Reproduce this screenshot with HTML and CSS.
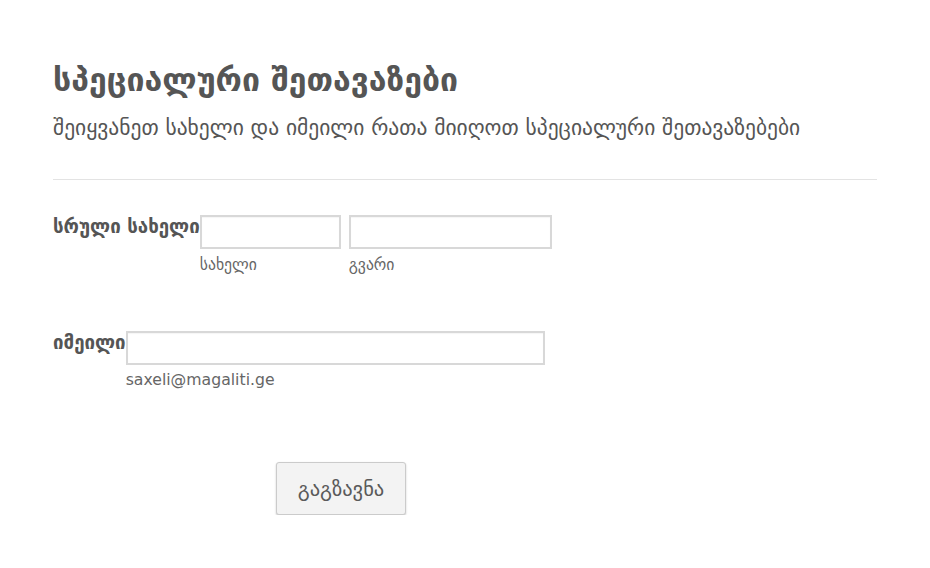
FILE: index.html
```html
<!DOCTYPE html>
<html lang="ka">
<head>
    <meta charset="UTF-8">
    <meta name="viewport" content="width=device-width, initial-scale=1.0">
    <title>სპეციალური შეთავაზები</title>
    <link rel="stylesheet" href="styles.css">
</head>
<body>
    <div class="form">
        <div class="header">
            <h1>სპეციალური შეთავაზები</h1>
            <p class="subtitle">შეიყვანეთ სახელი და იმეილი რათა მიიღოთ სპეციალური შეთავაზებები</p>
        </div>

        <div class="row row-name">
            <label class="label">სრული სახელი</label>
            <div class="field">
                <input type="text" class="input input-first">
                <span class="sub">სახელი</span>
            </div>
            <div class="field field-last">
                <input type="text" class="input input-last">
                <span class="sub">გვარი</span>
            </div>
        </div>

        <div class="row row-email">
            <label class="label">იმეილი</label>
            <div class="field">
                <input type="email" class="input input-email">
                <span class="sub sub-email">saxeli@magaliti.ge</span>
            </div>
        </div>

        <div class="actions">
            <button class="submit">გაგზავნა</button>
        </div>
    </div>
</body>
</html>
```

FILE: styles.css
```css
body {
    margin: 0;
    background-color: #fff;
    font-family: "DejaVu Sans", sans-serif;
    color: #555;
}
.form {
    padding: 54px 53px 0 53px;
    width: 824px;
}
.header {
    border-bottom: 1px solid #e3e3e3;
    padding-bottom: 35px;
}
h1 {
    margin: 0;
    font-size: 32px;
    font-weight: bold;
    line-height: 52px;
    color: #555;
}
.subtitle {
    margin: 6px 0 0 0;
    font-size: 21.5px;
    line-height: 32px;
    color: #555;
}
.row {
    display: flex;
    align-items: flex-start;
}
.row-name {
    margin-top: 35px;
}
.row-email {
    margin-top: 57px;
}
.label {
    font-size: 18.7px;
    font-weight: bold;
    line-height: 24px;
    color: #555;
}
.field {
    display: flex;
    flex-direction: column;
}
.field-last {
    margin-left: 8px;
}
.input {
    height: 34px;
    box-sizing: border-box;
    border: 2px solid #d8d8d8;
    border-radius: 0;
    padding: 4px 6px;
    font-size: 16px;
    outline: none;
    box-shadow: inset 0 1px 1px rgba(0, 0, 0, 0.04);
}
.input-first {
    width: 141px;
}
.input-last {
    width: 203px;
}
.input-email {
    width: 419px;
}
.sub {
    font-size: 15.7px;
    line-height: 18px;
    margin-top: 7px;
    color: #666;
}
.sub-email {
    margin-top: 6px;
}
.actions {
    margin-top: 73px;
    padding-left: 223px;
}
.submit {
    font-family: "DejaVu Sans", sans-serif;
    font-size: 20.5px;
    color: #5a5a5a;
    background-color: #f3f3f3;
    border: 1px solid #cbcbcb;
    border-radius: 3px;
    box-shadow: 0 1px 2px rgba(0, 0, 0, 0.22);
    width: 130px;
    height: 53px;
    padding: 0;
    cursor: pointer;
}
```
